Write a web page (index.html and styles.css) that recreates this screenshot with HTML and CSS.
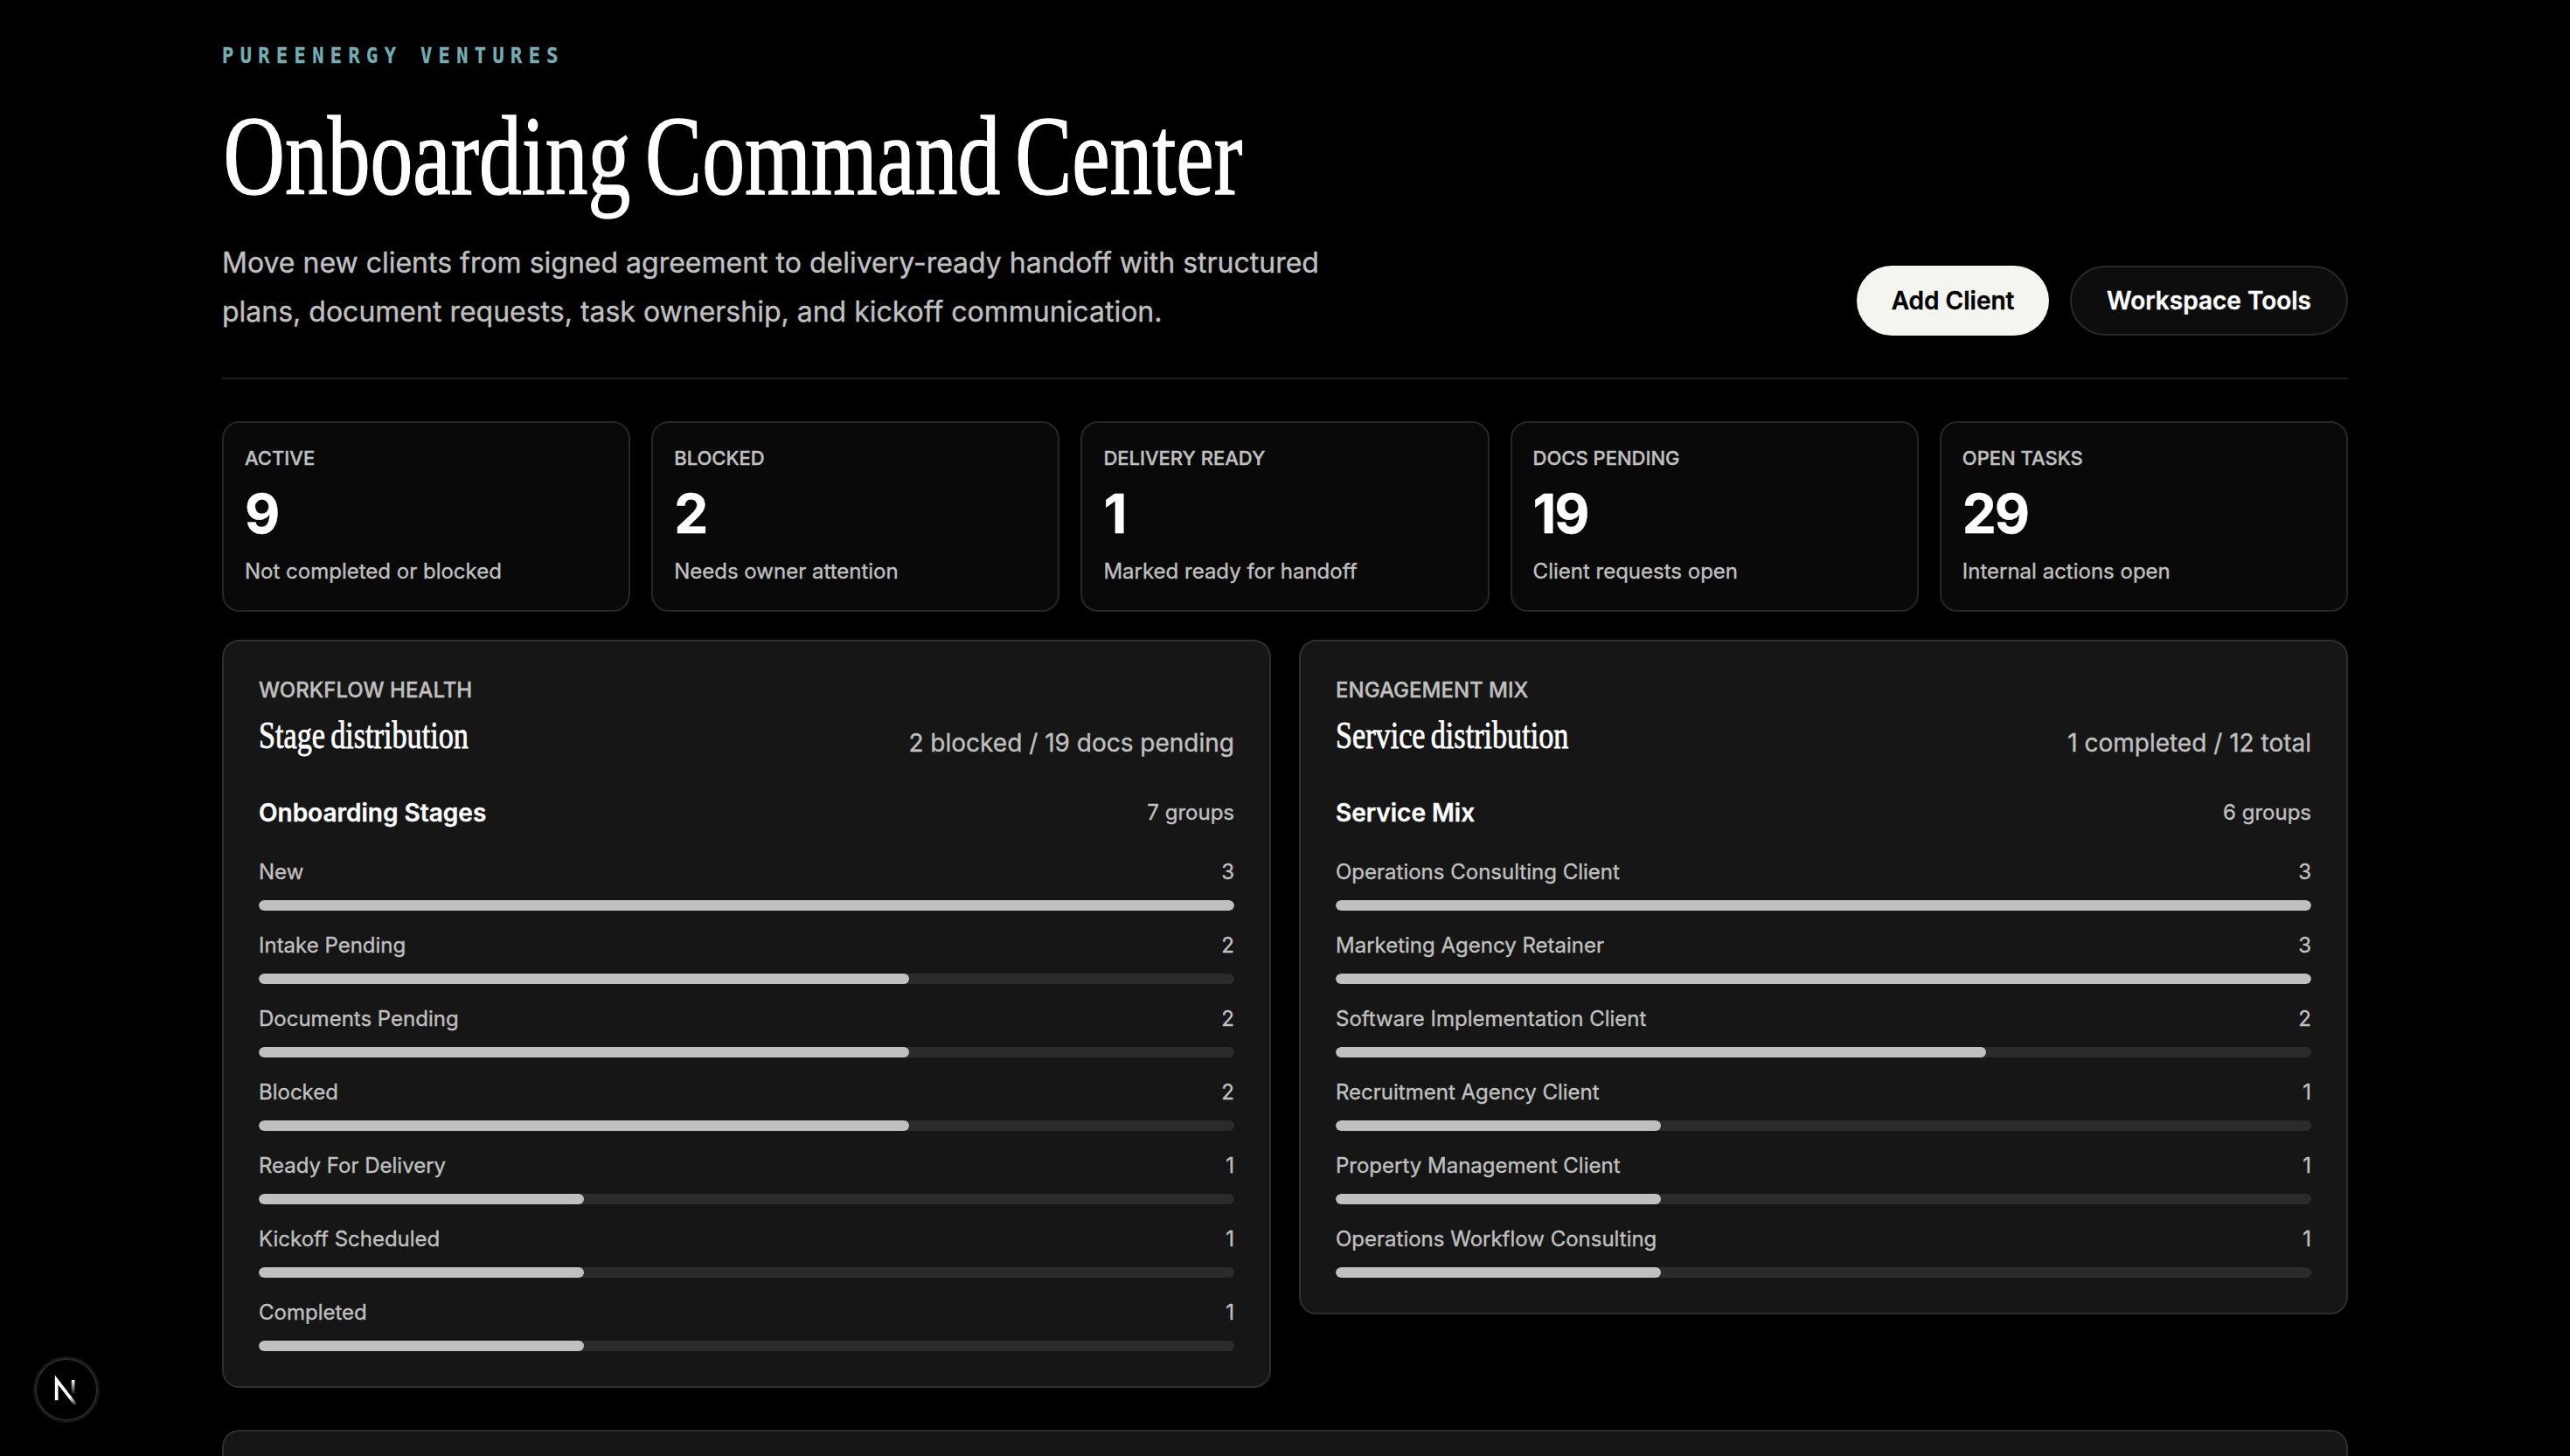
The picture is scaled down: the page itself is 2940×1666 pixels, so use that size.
FILE: index.html
```html
<!DOCTYPE html>
<html lang="en">
<head>
    <meta charset="UTF-8">
    <meta name="viewport" content="width=device-width, initial-scale=1.0">
    <title>Onboarding Command Center</title>
    <link rel="stylesheet" href="styles.css">
</head>
<body>
    <main class="page">
        <header class="page-header">
            <div class="intro">
                <p class="eyebrow">PUREENERGY VENTURES</p>
                <h1>Onboarding Command Center</h1>
                <p class="lead">Move new clients from signed agreement to delivery-ready handoff with structured plans, document requests, task ownership, and kickoff communication.</p>
            </div>
            <div class="actions">
                <button class="btn btn-primary">Add Client</button>
                <button class="btn btn-secondary">Workspace Tools</button>
            </div>
        </header>

        <section class="metrics">
            <article class="metric">
                <span class="metric-label">ACTIVE</span>
                <strong>9</strong>
                <span class="metric-note">Not completed or blocked</span>
            </article>
            <article class="metric">
                <span class="metric-label">BLOCKED</span>
                <strong>2</strong>
                <span class="metric-note">Needs owner attention</span>
            </article>
            <article class="metric">
                <span class="metric-label">DELIVERY READY</span>
                <strong>1</strong>
                <span class="metric-note">Marked ready for handoff</span>
            </article>
            <article class="metric">
                <span class="metric-label">DOCS PENDING</span>
                <strong>19</strong>
                <span class="metric-note">Client requests open</span>
            </article>
            <article class="metric">
                <span class="metric-label">OPEN TASKS</span>
                <strong>29</strong>
                <span class="metric-note">Internal actions open</span>
            </article>
        </section>

        <section class="panels">
            <article class="panel">
                <div class="panel-header">
                    <div class="panel-title">
                        <p>WORKFLOW HEALTH</p>
                        <h2>Stage distribution</h2>
                    </div>
                    <span class="panel-status">2 blocked / 19 docs pending</span>
                </div>
                <div class="group-header">
                    <h3>Onboarding Stages</h3>
                    <span>7 groups</span>
                </div>
                <ul class="bars">
                    <li>
                        <div class="bar-label"><span>New</span><span>3</span></div>
                        <div class="track"><div class="fill" style="width: 100%"></div></div>
                    </li>
                    <li>
                        <div class="bar-label"><span>Intake Pending</span><span>2</span></div>
                        <div class="track"><div class="fill" style="width: 66.67%"></div></div>
                    </li>
                    <li>
                        <div class="bar-label"><span>Documents Pending</span><span>2</span></div>
                        <div class="track"><div class="fill" style="width: 66.67%"></div></div>
                    </li>
                    <li>
                        <div class="bar-label"><span>Blocked</span><span>2</span></div>
                        <div class="track"><div class="fill" style="width: 66.67%"></div></div>
                    </li>
                    <li>
                        <div class="bar-label"><span>Ready For Delivery</span><span>1</span></div>
                        <div class="track"><div class="fill" style="width: 33.33%"></div></div>
                    </li>
                    <li>
                        <div class="bar-label"><span>Kickoff Scheduled</span><span>1</span></div>
                        <div class="track"><div class="fill" style="width: 33.33%"></div></div>
                    </li>
                    <li>
                        <div class="bar-label"><span>Completed</span><span>1</span></div>
                        <div class="track"><div class="fill" style="width: 33.33%"></div></div>
                    </li>
                </ul>
            </article>

            <article class="panel">
                <div class="panel-header">
                    <div class="panel-title">
                        <p>ENGAGEMENT MIX</p>
                        <h2>Service distribution</h2>
                    </div>
                    <span class="panel-status">1 completed / 12 total</span>
                </div>
                <div class="group-header">
                    <h3>Service Mix</h3>
                    <span>6 groups</span>
                </div>
                <ul class="bars">
                    <li>
                        <div class="bar-label"><span>Operations Consulting Client</span><span>3</span></div>
                        <div class="track"><div class="fill" style="width: 100%"></div></div>
                    </li>
                    <li>
                        <div class="bar-label"><span>Marketing Agency Retainer</span><span>3</span></div>
                        <div class="track"><div class="fill" style="width: 100%"></div></div>
                    </li>
                    <li>
                        <div class="bar-label"><span>Software Implementation Client</span><span>2</span></div>
                        <div class="track"><div class="fill" style="width: 66.67%"></div></div>
                    </li>
                    <li>
                        <div class="bar-label"><span>Recruitment Agency Client</span><span>1</span></div>
                        <div class="track"><div class="fill" style="width: 33.33%"></div></div>
                    </li>
                    <li>
                        <div class="bar-label"><span>Property Management Client</span><span>1</span></div>
                        <div class="track"><div class="fill" style="width: 33.33%"></div></div>
                    </li>
                    <li>
                        <div class="bar-label"><span>Operations Workflow Consulting</span><span>1</span></div>
                        <div class="track"><div class="fill" style="width: 33.33%"></div></div>
                    </li>
                </ul>
            </article>
        </section>

        <section class="panel-next"></section>
    </main>

    <div class="dev-badge">
        <svg width="32" height="30" viewBox="0 0 16 15" fill="none">
            <path d="M13.3 15.2 L2.34 1 V12.6" stroke="url(#slash)" stroke-width="1.86"/>
            <path d="M11.825 1 V12.6" stroke="url(#stem)" stroke-width="1.86"/>
            <defs>
                <linearGradient id="slash" gradientUnits="userSpaceOnUse" x1="9.95" y1="10.9" x2="13.6" y2="15.6">
                    <stop stop-color="#fff"/>
                    <stop offset="0.6" stop-color="#fff" stop-opacity="0.45"/>
                    <stop offset="1" stop-color="#fff" stop-opacity="0"/>
                </linearGradient>
                <linearGradient id="stem" gradientUnits="userSpaceOnUse" x1="11.8" y1="1" x2="11.8" y2="9.5">
                    <stop stop-color="#fff"/>
                    <stop offset="1" stop-color="#fff" stop-opacity="0"/>
                </linearGradient>
            </defs>
        </svg>
    </div>
</body>
</html>
```
FILE: styles.css
```css
* {
    box-sizing: border-box;
}

body {
    margin: 0;
    background: #000;
    color: #fff;
    font-family: Inter, "Liberation Sans", sans-serif;
    -webkit-text-stroke: 0.35px currentColor;
}

h1, h2, h3, p, ul {
    margin: 0;
    padding: 0;
}

.page {
    display: flex;
    flex-direction: column;
    width: 2432px;
    height: 100vh;
    margin: 0 auto;
    padding-top: 48px;
}

/* header */

.page-header {
    display: flex;
    justify-content: space-between;
    align-items: flex-end;
    padding-bottom: 47px;
    border-bottom: 2px solid #1f1f1f;
}

.intro {
    width: 1300px;
}

.eyebrow {
    font: bold 24.5px/32px "DejaVu Sans Mono", monospace;
    letter-spacing: 8.3px;
    color: #74adb3;
    white-space: nowrap;
    transform: scaleX(0.895);
    transform-origin: left;
}

h1 {
    margin-top: 38px;
    font: 400 130px/120px "Liberation Serif", serif;
    word-spacing: -10px;
    text-indent: 2px;
    white-space: nowrap;
    transform: scaleX(0.75);
    transform-origin: left;
    -webkit-text-stroke: 1.5px #fff;
}

.lead {
    margin-top: 35px;
    font-size: 32px;
    line-height: 56px;
    color: #c0c0c0;
}

.actions {
    display: flex;
    gap: 24px;
    padding-bottom: 1px;
}

.btn {
    height: 80px;
    padding: 0 39.6px;
    border: none;
    border-radius: 40px;
    font: 600 28px Inter, "Liberation Sans", sans-serif;
    -webkit-text-stroke: inherit;
}

.btn-primary {
    background: #f4f5ee;
    color: #000;
}

.btn-secondary {
    padding: 0 40px;
    border: 2px solid #292929;
    background: #0d0d0d;
    color: #fff;
}

/* metric cards */

.metrics {
    display: grid;
    grid-template-columns: repeat(5, 1fr);
    gap: 24px;
    margin-top: 48px;
}

.metric {
    display: flex;
    flex-direction: column;
    padding: 24px;
    border: 2px solid #262626;
    border-radius: 20px;
    background: #090909;
    color: #c0c0c0;
}

.metric-label {
    font-size: 22px;
    font-weight: 500;
    line-height: 32px;
}

.metric strong {
    margin: 17px 0 15px;
    font-size: 62px;
    line-height: 62px;
    letter-spacing: -2.2px;
    color: #fff;
}

.metric-note {
    font-size: 24px;
    line-height: 40px;
}

/* panels */

.panels {
    display: grid;
    grid-template-columns: 1fr 1fr;
    align-items: start;
    gap: 32px;
    margin-top: 32px;
}

.panel {
    padding: 40px;
    border: 2px solid #2e2e2e;
    border-radius: 20px;
    background: #161616;
}

.panel-next {
    flex: 1;
    margin-top: 48px;
    border: 2px solid #2e2e2e;
    border-bottom: none;
    border-radius: 20px 20px 0 0;
    background: #161616;
}

.panel-header,
.group-header,
.bar-label {
    display: flex;
    justify-content: space-between;
    color: #c0c0c0;
}

.panel-header {
    align-items: flex-end;
}

.panel-title {
    padding-bottom: 8px;
}

.panel-title p {
    font-size: 24px;
    font-weight: 500;
    line-height: 32px;
}

.panel-title h2 {
    margin-top: 14px;
    font: 400 44px/44px "Liberation Serif", serif;
    word-spacing: -3px;
    color: #fff;
    white-space: nowrap;
    transform: scaleX(0.777);
    transform-origin: left;
    -webkit-text-stroke: 0.8px #fff;
}

.panel-status {
    font-size: 28px;
    line-height: 44px;
}

.group-header {
    align-items: center;
    margin-top: 36px;
    font-size: 24px;
    line-height: 44px;
}

.group-header h3 {
    font-size: 28px;
    font-weight: 600;
    color: #fff;
}

.bars {
    display: grid;
    gap: 20px;
    margin-top: 26px;
    list-style: none;
}

.bar-label {
    padding-top: 1px;
    margin-bottom: 13px;
    font-size: 24px;
    line-height: 38px;
}

.track {
    height: 12px;
    border-radius: 6px;
    background: #2b2b2b;
    overflow: hidden;
}

.fill {
    height: 100%;
    border-radius: 6px;
    background: #c0c0c0;
}

/* dev tools badge */

.dev-badge {
    position: fixed;
    left: 38px;
    bottom: 38px;
    display: flex;
    align-items: center;
    justify-content: center;
    width: 76px;
    height: 76px;
    padding-top: 4px;
    border: 2px solid #171717;
    border-radius: 50%;
    background: #000;
    box-shadow: inset 0 0 0 2px #2a2a2a;
}

.dev-badge svg {
    overflow: visible;
}
```
